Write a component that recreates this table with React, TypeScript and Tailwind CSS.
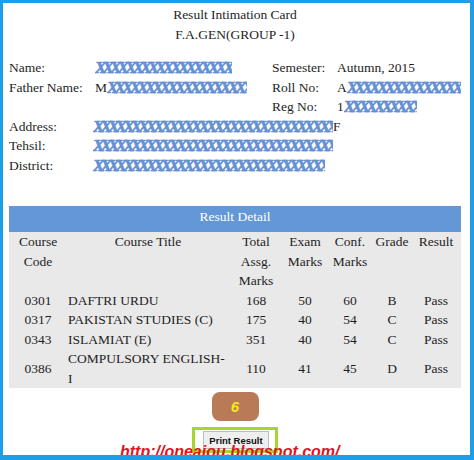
const XS = "XXXXXXXXXXXXXXXXXXXXXXXXXXXXXXXXXXXXXXXXXX";

// blue "xxx" scribble that hides private details
function Scribble({ w, pre, post }: { w: string; pre?: string; post?: string }) {
  return (
    <span className="whitespace-nowrap">
      {pre}
      <span
        className={`inline-block align-top h-[19.5px] overflow-hidden whitespace-nowrap leading-[19.5px] text-[17px] font-bold italic tracking-[-3.8px] text-[#6490d2] [-webkit-text-stroke:0.7px_#6490d2] ${w}`}
      >
        {XS}
      </span>
      {post}
    </span>
  );
}

const ROWS = [
  { code: "0301", title: "DAFTRI URDU", total: "168", exam: "50", conf: "60", grade: "B", result: "Pass" },
  { code: "0317", title: "PAKISTAN STUDIES (C)", total: "175", exam: "40", conf: "54", grade: "C", result: "Pass" },
  { code: "0343", title: "ISLAMIAT (E)", total: "351", exam: "40", conf: "54", grade: "C", result: "Pass" },
  { code: "0386", title: "COMPULSORY ENGLISH-I", total: "110", exam: "41", conf: "45", grade: "D", result: "Pass" },
];

export default function App() {
  return (
    <div className="relative w-[474px] h-[460px] overflow-hidden bg-white border-[#1c9fe6] border-l-[3px] border-t-[3px] border-r-[4px] border-b-[5px] [font-family:'Liberation_Serif',serif] text-[13.5px] leading-[19.5px] text-[#1e1e1e]">
      <div className="pl-[6px] pr-[9px] pt-[2px]">
        {/* Heading */}
        <div className="text-center">
          <div>Result Intimation Card</div>
          <div>F.A.GEN(GROUP -1)</div>
        </div>

        {/* Student info */}
        <div className="mt-[14px] grid grid-cols-[86px_177px_65px_1fr]">
          <div>Name:</div>
          <div><Scribble w="w-[137px]" /></div>
          <div>Semester:</div>
          <div>Autumn, 2015</div>

          <div>Father Name:</div>
          <div><Scribble pre="M" w="w-[140px]" /></div>
          <div>Roll No:</div>
          <div className="overflow-hidden"><Scribble pre="A" w="w-[128px]" /></div>

          <div />
          <div />
          <div>Reg No:</div>
          <div><Scribble pre="1" w="w-[73px]" /></div>
        </div>

        <div className="grid grid-cols-[84px_1fr]">
          <div>Address:</div>
          <div><Scribble w="w-[240px]" post="F" /></div>
          <div>Tehsil:</div>
          <div><Scribble w="w-[240px]" /></div>
          <div>District:</div>
          <div><Scribble w="w-[232px]" /></div>
        </div>

        {/* Result table */}
        <div className="mt-[31px] h-[26px] pt-[1px] bg-[#6497d6] text-center text-white">Result Detail</div>
        <table className="w-[452px] table-fixed border-collapse bg-[#e9e9e9]">
          <colgroup>
            <col className="w-[58px]" />
            <col className="w-[162px]" />
            <col className="w-[54px]" />
            <col className="w-[44px]" />
            <col className="w-[46px]" />
            <col className="w-[38px]" />
            <col className="w-[50px]" />
          </colgroup>
          <thead>
            <tr className="align-top text-center">
              <th className="font-normal px-[2px]">Course Code</th>
              <th className="font-normal px-[2px]">Course Title</th>
              <th className="font-normal px-[2px]">Total Assg. Marks</th>
              <th className="font-normal px-[2px]">Exam Marks</th>
              <th className="font-normal px-[2px]">Conf. Marks</th>
              <th className="font-normal px-[2px]">Grade</th>
              <th className="font-normal px-[2px]">Result</th>
            </tr>
          </thead>
          <tbody>
            {ROWS.map((r) => (
              <tr key={r.code} className="align-middle text-center">
                <td className="px-[2px]">{r.code}</td>
                <td className="pr-[2px] pl-[1px] text-left">{r.title}</td>
                <td className="px-[2px]">{r.total}</td>
                <td className="px-[2px]">{r.exam}</td>
                <td className="px-[2px]">{r.conf}</td>
                <td className="px-[2px]">{r.grade}</td>
                <td className="px-[2px]">{r.result}</td>
              </tr>
            ))}
          </tbody>
        </table>

        {/* Step badge + print button */}
        <div className="flex flex-col items-center">
          <div className="mt-[4px] w-[47px] h-[29px] rounded-[8px] bg-[#b97a57] flex items-center justify-center [font-family:'Liberation_Sans',sans-serif] text-[15px] font-bold italic text-[#f6e81a]">
            6
          </div>
          <div className="mt-[6px] w-[86px] h-[26px] border-[3px] border-[#a6d52b] flex justify-center pt-[1px] pl-[2px]">
            <button className="h-[18px] px-[5px] bg-[#efefef] border border-[#bdbdbd] [font-family:'Liberation_Sans',sans-serif] text-[9.5px] font-bold text-[#111] leading-[15px]">
              Print Result
            </button>
          </div>
        </div>
      </div>

      {/* blog watermark */}
      <div className="absolute left-[117px] top-[441px] [font-family:'Liberation_Sans',sans-serif] text-[16px] leading-[16px] font-bold italic text-[#e3131b]">
        http://oneaiou.blogspot.com/
      </div>
    </div>
  );
}
